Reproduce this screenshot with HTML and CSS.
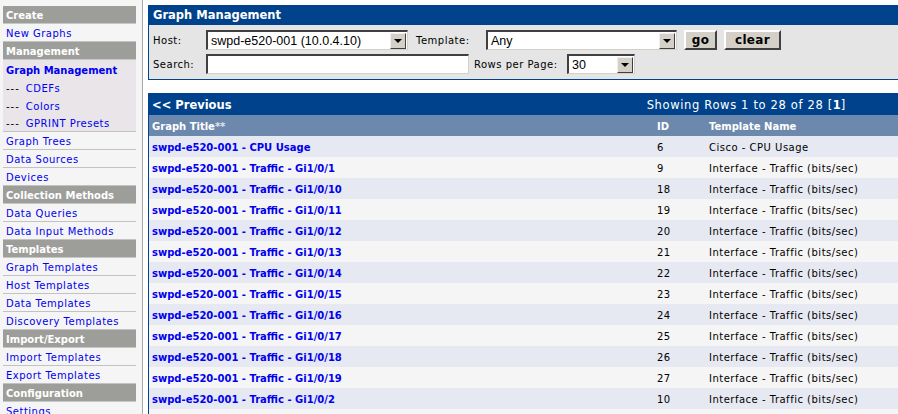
FILE: index.html
```html
<!DOCTYPE html>
<html>
<head>
<meta charset="utf-8">
<title>Graph Management</title>
<link rel="stylesheet" href="styles.css">
</head>
<body>
<div class="page">
  <nav class="menu">
    <div class="mhead">Create</div>
    <a class="mitem" href="#">New Graphs</a>
    <div class="mhead">Management</div>
    <div class="msub">
      <a class="sitem cur" href="#">Graph Management</a>
      <div class="sitem"><span class="dash">---</span><a href="#">CDEFs</a></div>
      <div class="sitem"><span class="dash">---</span><a href="#">Colors</a></div>
      <div class="sitem last"><span class="dash">---</span><a href="#">GPRINT Presets</a></div>
    </div>
    <a class="mitem" href="#">Graph Trees</a>
    <a class="mitem" href="#">Data Sources</a>
    <a class="mitem" href="#">Devices</a>
    <div class="mhead">Collection Methods</div>
    <a class="mitem" href="#">Data Queries</a>
    <a class="mitem" href="#">Data Input Methods</a>
    <div class="mhead">Templates</div>
    <a class="mitem" href="#">Graph Templates</a>
    <a class="mitem" href="#">Host Templates</a>
    <a class="mitem" href="#">Data Templates</a>
    <a class="mitem" href="#">Discovery Templates</a>
    <div class="mhead">Import/Export</div>
    <a class="mitem" href="#">Import Templates</a>
    <a class="mitem" href="#">Export Templates</a>
    <div class="mhead">Configuration</div>
    <a class="mitem" href="#">Settings</a>
  </nav>

  <main class="content">
    <section class="box filterbox">
      <div class="boxtitle">Graph Management</div>
      <div class="filters">
        <div class="frow">
          <span class="lbl l-host">Host:</span>
          <div class="sel s-host"><span class="seltext">swpd-e520-001 (10.0.4.10)</span><span class="arrow"></span></div>
          <span class="lbl l-tpl">Template:</span>
          <div class="sel s-tpl"><span class="seltext">Any</span><span class="arrow"></span></div>
          <button class="btn b-go">go</button>
          <button class="btn b-clear">clear</button>
        </div>
        <div class="frow">
          <span class="lbl l-host">Search:</span>
          <div class="inp"></div>
          <span class="lbl l-rows">Rows per Page:</span>
          <div class="sel s-rows"><span class="seltext">30</span><span class="arrow"></span></div>
        </div>
      </div>
    </section>

    <section class="box listbox">
      <div class="navbar">
        <span class="prev">&lt;&lt; Previous</span>
        <span class="showing">Showing Rows 1 to 28 of 28 [<b>1</b>]</span>
      </div>
      <div class="thead">
        <span class="c-title">Graph Title<span class="stars">**</span></span>
        <span class="c-id">ID</span>
        <span class="c-tpl">Template Name</span>
      </div>
      <div class="trow"><a class="c-title" href="#">swpd-e520-001 - CPU Usage</a><span class="c-id">6</span><span class="c-tpl">Cisco - CPU Usage</span></div>
      <div class="trow"><a class="c-title" href="#">swpd-e520-001 - Traffic - Gi1/0/1</a><span class="c-id">9</span><span class="c-tpl">Interface - Traffic (bits/sec)</span></div>
      <div class="trow"><a class="c-title" href="#">swpd-e520-001 - Traffic - Gi1/0/10</a><span class="c-id">18</span><span class="c-tpl">Interface - Traffic (bits/sec)</span></div>
      <div class="trow"><a class="c-title" href="#">swpd-e520-001 - Traffic - Gi1/0/11</a><span class="c-id">19</span><span class="c-tpl">Interface - Traffic (bits/sec)</span></div>
      <div class="trow"><a class="c-title" href="#">swpd-e520-001 - Traffic - Gi1/0/12</a><span class="c-id">20</span><span class="c-tpl">Interface - Traffic (bits/sec)</span></div>
      <div class="trow"><a class="c-title" href="#">swpd-e520-001 - Traffic - Gi1/0/13</a><span class="c-id">21</span><span class="c-tpl">Interface - Traffic (bits/sec)</span></div>
      <div class="trow"><a class="c-title" href="#">swpd-e520-001 - Traffic - Gi1/0/14</a><span class="c-id">22</span><span class="c-tpl">Interface - Traffic (bits/sec)</span></div>
      <div class="trow"><a class="c-title" href="#">swpd-e520-001 - Traffic - Gi1/0/15</a><span class="c-id">23</span><span class="c-tpl">Interface - Traffic (bits/sec)</span></div>
      <div class="trow"><a class="c-title" href="#">swpd-e520-001 - Traffic - Gi1/0/16</a><span class="c-id">24</span><span class="c-tpl">Interface - Traffic (bits/sec)</span></div>
      <div class="trow"><a class="c-title" href="#">swpd-e520-001 - Traffic - Gi1/0/17</a><span class="c-id">25</span><span class="c-tpl">Interface - Traffic (bits/sec)</span></div>
      <div class="trow"><a class="c-title" href="#">swpd-e520-001 - Traffic - Gi1/0/18</a><span class="c-id">26</span><span class="c-tpl">Interface - Traffic (bits/sec)</span></div>
      <div class="trow"><a class="c-title" href="#">swpd-e520-001 - Traffic - Gi1/0/19</a><span class="c-id">27</span><span class="c-tpl">Interface - Traffic (bits/sec)</span></div>
      <div class="trow"><a class="c-title" href="#">swpd-e520-001 - Traffic - Gi1/0/2</a><span class="c-id">10</span><span class="c-tpl">Interface - Traffic (bits/sec)</span></div>
      <div class="trow"><a class="c-title" href="#">swpd-e520-001 - Traffic - Gi1/0/20</a><span class="c-id">28</span><span class="c-tpl">Interface - Traffic (bits/sec)</span></div>
    </section>
  </main>
</div>
</body>
</html>
```

FILE: styles.css
```css
* { box-sizing: border-box; }
html, body { margin: 0; padding: 0; }
body {
  width: 898px;
  height: 414px;
  overflow: hidden;
  background: #ffffff;
  font-family: "DejaVu Sans", Verdana, sans-serif;
  font-size: 10px;
  letter-spacing: 0.5px;
  color: #000;
}
b, strong { letter-spacing: 0; }
a { text-decoration: none; color: #0000ee; }

.page {
  display: flex;
  align-items: flex-start;
  width: 1000px;
}

/* ---------- sidebar ---------- */
.menu {
  flex: 0 0 143px;
  min-height: 430px;
  background: #f5f5f5;
  border-right: 1px solid #a8a8a8;
  padding: 6px 6px 0 3px;
  display: flex;
  flex-direction: column;
}
.mhead {
  height: 18px;
  line-height: 17px;
  padding-top: 1px;
  background: #9d9e9a;
  border-bottom: 1px solid #c4c8c8;
  color: #fff;
  font-weight: bold;
  letter-spacing: 0;
  padding-left: 3px;
  overflow: hidden;
}
.mitem {
  display: block;
  height: 18px;
  line-height: 17px;
  padding-top: 1px;
  border-bottom: 1px solid #c2c2c2;
  padding-left: 3px;
  color: #0000ee;
  overflow: hidden;
}
.msub { background: #e9e5e9; }
.sitem {
  height: 18px;
  line-height: 17px;
  padding-top: 2px;
  padding-left: 3px;
  color: #000;
  display: block;
}
.sitem.cur { color: #0000ee; font-weight: bold; letter-spacing: 0; }
.sitem.last { border-bottom: 1px solid #c2c2c2; padding-top: 1px; }
.dash { color: #000; margin-right: 6px; letter-spacing: 1px; }

/* ---------- content ---------- */
.content {
  flex: 0 0 760px;
  margin-left: 5px;
  padding-top: 5px;
  display: flex;
  flex-direction: column;
}
.box {
  border: 1px solid #00438c;
  border-right: none;
}
.filterbox { border-top: none; }
.boxtitle {
  height: 20px;
  line-height: 21px;
  background: #00438c;
  color: #fff;
  font-weight: bold;
  letter-spacing: 0;
  font-size: 11.5px;
  padding-left: 4px;
}
.filters {
  background: #e5e5e5;
  padding: 5px 0 5px 4px;
  display: flex;
  flex-direction: column;
  gap: 4px;
}
.frow {
  display: flex;
  align-items: center;
  height: 20px;
}
.lbl { white-space: nowrap; padding-top: 1px; }
.l-host { width: 53px; }
.l-tpl { width: 70px; margin-left: 8px; }
.l-rows { width: 93px; margin-left: 5px; }

.sel, .inp {
  height: 20px;
  background: #fff;
  border-top: 2px solid #404040;
  border-left: 2px solid #404040;
  border-bottom: 1px solid #d4d0c8;
  border-right: 1px solid #d4d0c8;
  display: flex;
  align-items: center;
  justify-content: space-between;
}
.seltext {
  font-family: "Liberation Sans", Arimo, Arial, sans-serif;
  font-size: 12.5px;
  letter-spacing: 0;
  padding-left: 3px;
  white-space: nowrap;
  padding-top: 1px;
}
.arrow {
  width: 16px;
  height: 16px;
  margin-right: 1px;
  background: #d4d0c8;
  border-top: 1px solid #f0f0f0;
  border-left: 1px solid #f0f0f0;
  border-right: 1px solid #404040;
  border-bottom: 1px solid #404040;
  display: flex;
  align-items: center;
  justify-content: center;
}
.arrow::after {
  content: "";
  width: 0;
  height: 0;
  border-left: 4px solid transparent;
  border-right: 4px solid transparent;
  border-top: 4px solid #000;
}
.s-host { width: 202px; }
.s-tpl { width: 191px; }
.s-rows { width: 68px; }
.inp { width: 263px; }

.btn {
  height: 20px;
  margin-left: 7px;
  background: #d4d0c8;
  border-top: 2px solid #ffffff;
  border-left: 2px solid #ffffff;
  border-right: 2px solid #404040;
  border-bottom: 2px solid #404040;
  font-family: "DejaVu Sans", Verdana, sans-serif;
  font-weight: bold;
  font-size: 12px;
  letter-spacing: 0.3px;
  padding: 0;
  color: #000;
}
.b-go { width: 33px; }
.b-clear { width: 57px; }

.listbox { margin-top: 13px; }
.navbar {
  height: 21px;
  background: #00438c;
  color: #fff;
  font-size: 11.5px;
  letter-spacing: 0.65px;
  display: flex;
  align-items: center;
  justify-content: space-between;
  padding: 1px 62px 0 3px;
}
.prev { font-weight: bold; letter-spacing: 0; }
.thead {
  height: 21px;
  background: #6d88ad;
  color: #fff;
  font-weight: bold;
  letter-spacing: 0;
  display: flex;
  align-items: center;
  padding: 1px 0 0 3px;
}
.stars { color: #e0e4ee; }
.trow {
  height: 21px;
  display: flex;
  align-items: center;
  padding: 1px 0 0 3px;
  background: #f5f5f5;
}
.trow:nth-child(2n+1) { background: #e7e9f2; }
.trow .c-title { font-weight: bold; letter-spacing: 0; color: #0000ee; }
.c-title { width: 505px; white-space: nowrap; }
.c-id { width: 52px; }
.c-tpl { white-space: nowrap; }
```
